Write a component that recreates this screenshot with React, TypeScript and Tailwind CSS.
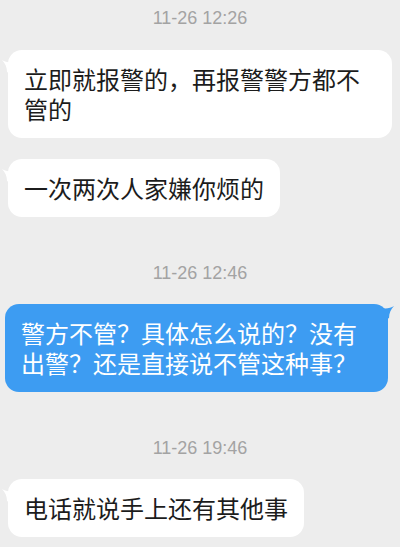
import React from "react";

const font = { fontFamily: '"Noto Sans CJK SC", "Noto Sans", sans-serif' };

function Time({ t }: { t: string }) {
  return (
    <div
      className="text-center text-[18px] leading-[20px] text-[#a3a3a3]"
      style={{ fontFamily: '"Liberation Sans", "Noto Sans", sans-serif' }}
    >
      {t}
    </div>
  );
}

function In({ text }: { text: string }) {
  return (
    <div className="flex pl-[8px]">
      <div className="relative max-w-[384px] rounded-[14px] bg-white px-[16px] py-[14px] text-[24px] leading-[30px] text-[#1c1c1c]">
        <svg className="absolute left-[-6px] top-[10px]" width="12" height="16" viewBox="0 0 12 16">
          <path d="M12 2 C8 3 3 2 0 0 C3 3 5 7 5 12 L12 16 Z" fill="#ffffff" />
        </svg>
        {text}
      </div>
    </div>
  );
}

function Out({ text }: { text: string }) {
  return (
    <div className="flex justify-end pr-[12px]">
      <div className="relative max-w-[383px] rounded-[14px] bg-[#3d9cf2] px-[16px] py-[14px] text-[24px] leading-[30px] text-white">
        <svg className="absolute right-[-6px] top-[2px]" width="12" height="16" viewBox="0 0 12 16">
          <path d="M0 2 C4 3 9 2 12 0 C9 3 7 7 7 12 L0 16 Z" fill="#3d9cf2" />
        </svg>
        {text}
      </div>
    </div>
  );
}

export default function App() {
  return (
    <div className="h-[547px] w-[400px] overflow-hidden bg-[#ededed]" style={font}>
      <div className="flex flex-col pt-[8px]">
        <Time t="11-26 12:26" />
        <div className="h-[22px]" />
        <In text="立即就报警的，再报警警方都不管的" />
        <div className="h-[21px]" />
        <In text="一次两次人家嫌你烦的" />
        <div className="h-[46px]" />
        <Time t="11-26 12:46" />
        <div className="h-[21px]" />
        <Out text="警方不管？具体怎么说的？没有出警？还是直接说不管这种事？" />
        <div className="h-[46px]" />
        <Time t="11-26 19:46" />
        <div className="h-[21px]" />
        <In text="电话就说手上还有其他事" />
      </div>
    </div>
  );
}
